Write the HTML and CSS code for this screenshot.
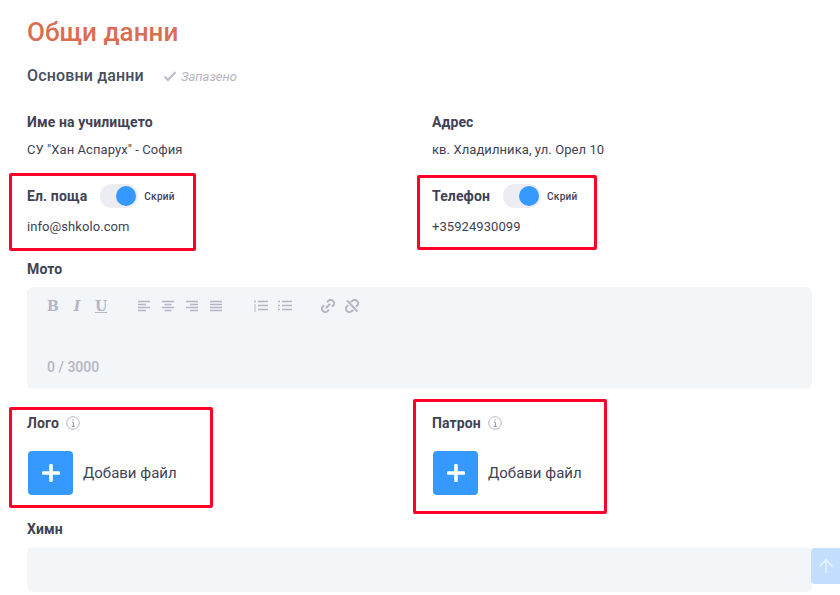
FILE: index.html
```html
<!DOCTYPE html>
<html lang="bg">
<head>
<meta charset="utf-8">
<title>Общи данни</title>
<link rel="stylesheet" href="styles.css">
</head>
<body>
<main class="page">
  <h1 class="title">Общи данни</h1>
  <div class="section-head">
    <h2 class="section-title">Основни данни</h2>
    <span class="saved">
      <svg class="saved-check" viewBox="0 0 14 12" width="14" height="12"><path d="M1.5 6.5 5 10 12.5 2" fill="none" stroke="#b9bcc7" stroke-width="2"/></svg>
      <em>Запазено</em>
    </span>
  </div>

  <div class="row row-info">
    <div class="field">
      <div class="label">Име на училището</div>
      <div class="value">СУ "Хан Аспарух" - София</div>
    </div>
    <div class="field">
      <div class="label">Адрес</div>
      <div class="value">кв. Хладилника, ул. Орел 10</div>
    </div>
  </div>

  <div class="row row-contact">
    <div class="field">
      <div class="label-line">
        <span class="label">Ел. поща</span>
        <span class="switch"><span class="knob"></span></span>
        <span class="switch-text">Скрий</span>
      </div>
      <div class="value value-contact">info@shkolo.com</div>
    </div>
    <div class="field">
      <div class="label-line">
        <span class="label">Телефон</span>
        <span class="switch"><span class="knob"></span></span>
        <span class="switch-text">Скрий</span>
      </div>
      <div class="value value-contact">+35924930099</div>
    </div>
  </div>

  <div class="label label-moto">Мото</div>
  <div class="editor">
    <div class="toolbar">
      <div class="tool-group group-text">
        <span class="glyph glyph-b">B</span>
        <span class="glyph glyph-i">I</span>
        <span class="glyph glyph-u">U</span>
      </div>
      <div class="tool-group group-align">
        <svg class="tool" viewBox="0 0 13 12" width="13" height="12"><path d="M0 1.5h12M0 4.5h8M0 7.5h12M0 10.5h8"/></svg>
        <svg class="tool" viewBox="0 0 13 12" width="13" height="12"><path d="M0 1.5h12M2.5 4.5h7M0 7.5h12M2.5 10.5h7"/></svg>
        <svg class="tool" viewBox="0 0 13 12" width="13" height="12"><path d="M0 1.5h12M4 4.5h8M0 7.5h12M4 10.5h8"/></svg>
        <svg class="tool" viewBox="0 0 13 12" width="13" height="12"><path d="M0 1.5h12M0 4.5h12M0 7.5h12M0 10.5h12"/></svg>
      </div>
      <div class="tool-group group-list">
        <svg class="tool" viewBox="0 0 14 12" width="14" height="12"><path d="M4 1.5h10M4 5.5h10M4 9.5h10"/><path class="thin" d="M0 1h2M1 1v2M0 5h2M0 7h2M0 9h2M0 11h2"/></svg>
        <svg class="tool" viewBox="0 0 14 12" width="14" height="12"><path d="M4 1.5h10M4 5.5h10M4 9.5h10M0 1.5h2M0 5.5h2M0 9.5h2"/></svg>
      </div>
      <div class="tool-group group-link">
        <svg class="tool tool-link" viewBox="0 0 14 14" width="14" height="14"><path d="M6 3.2 7.8 1.6a2.6 2.6 0 0 1 3.7 0l.9.9a2.6 2.6 0 0 1 0 3.7L10.800 7.800M8 10.800 6.200 12.400a2.600 2.600 0 0 1-3.700 0l-.9-.9a2.600 2.600 0 0 1 0-3.700L3.200 6.200M4.800 9.200 9.200 4.800"/></svg>
        <svg class="tool tool-link" viewBox="0 0 14 14" width="14" height="14"><path d="M5.500 3 7.800 1.600a2.600 2.600 0 0 1 3.700 0l.9.900a2.600 2.600 0 0 1 0 3.700L11 8M8.500 11 6.200 12.400a2.600 2.600 0 0 1-3.700 0l-.9-.9a2.600 2.600 0 0 1 0-3.700L3 6M2 1.500 12.500 12.500"/></svg>
      </div>
    </div>
    <div class="counter">0 / 3000</div>
  </div>

  <div class="row row-upload">
    <div class="field">
      <div class="label-line label-line-info">
        <span class="label">Лого</span>
        <svg class="info" viewBox="0 0 14 14" width="14" height="14"><circle cx="7" cy="7" r="6.300" fill="none" stroke="#b4b7c2"/><path d="M7 3.200v1.300M5.800 6.200H7.300V10.400M5.600 10.500h3.200" fill="none" stroke="#8f92a0"/></svg>
      </div>
      <div class="upload">
        <span class="upload-tile"><svg viewBox="0 0 18 18" width="18" height="18"><path d="M9 1.500v15M1.500 9h15" stroke="#fff" stroke-width="3.600" stroke-linecap="round"/></svg></span>
        <span class="upload-text">Добави файл</span>
      </div>
    </div>
    <div class="field">
      <div class="label-line label-line-info">
        <span class="label">Патрон</span>
        <svg class="info" viewBox="0 0 14 14" width="14" height="14"><circle cx="7" cy="7" r="6.300" fill="none" stroke="#b4b7c2"/><path d="M7 3.200v1.300M5.800 6.200H7.300V10.400M5.600 10.500h3.200" fill="none" stroke="#8f92a0"/></svg>
      </div>
      <div class="upload">
        <span class="upload-tile"><svg viewBox="0 0 18 18" width="18" height="18"><path d="M9 1.500v15M1.500 9h15" stroke="#fff" stroke-width="3.600" stroke-linecap="round"/></svg></span>
        <span class="upload-text">Добави файл</span>
      </div>
    </div>
  </div>

  <div class="label label-anthem">Химн</div>
  <div class="editor editor-anthem"></div>

  <span class="mark mark-email"></span>
  <span class="mark mark-phone"></span>
  <span class="mark mark-logo"></span>
  <span class="mark mark-patron"></span>
  <span class="to-top"><svg viewBox="0 0 16 16" width="16" height="16"><path d="M8 15V2M1.500 8.500 8 2l6.500 6.500" fill="none" stroke="#e6f2ff" stroke-width="1.600"/></svg></span>
</main>
</body>
</html>
```
FILE: styles.css
```css
* { box-sizing: border-box; }
html, body { margin: 0; height: 100%; overflow: hidden; background: #fff; }
body { font-family: Roboto, "Liberation Sans", sans-serif; color: #3f4254; }

.page {
  position: relative;
  width: 840px;
  height: 595px;
  padding: 17px 28px 0 27px;
  overflow: hidden;
}

.title {
  margin: 0;
  height: 30px;
  font-size: 26px;
  line-height: 30px;
  font-weight: 500;
  letter-spacing: .05px;
  color: #d96e53;
}

.section-head {
  display: flex;
  align-items: center;
  height: 20px;
  margin-top: 19px;
}
.section-title { margin: 0; font-size: 16px; line-height: 20px; font-weight: 500; letter-spacing: .16px; color: #464e5f; }
.saved { display: flex; align-items: center; margin-left: 19px; font-size: 13px; color: #b5b5c3; }
.saved-check { margin-right: 4px; }
.saved em { font-style: italic; }

.row { display: grid; grid-template-columns: 405px 1fr; }
.row-info { margin-top: 27px; }
.row-contact { margin-top: 25px; }
.row-upload { margin-top: 25px; }

.label { font-size: 14px; line-height: 18px; font-weight: 700; letter-spacing: .12px; color: #3f4254; }
.value { margin-top: 10px; font-size: 13px; line-height: 18px; font-weight: 400; letter-spacing: .07px; color: #3f4254; }
.value-contact { margin-top: 10px; }

.label-line { display: flex; align-items: center; height: 24px; }
.switch {
  display: flex;
  justify-content: flex-end;
  align-items: center;
  width: 38px;
  height: 24px;
  margin-left: 13px;
  padding-right: 2px;
  border-radius: 12px;
  background: #ebedf3;
}
.knob { width: 20px; height: 20px; border-radius: 50%; background: #3699ff; }
.switch-text { margin-left: 6px; font-size: 10px; font-weight: 500; letter-spacing: .3px; color: #3f4254; }

.label-moto { margin-top: 24px; }
.editor { margin-top: 9px; height: 102px; padding: 11px 20px 0; background: #f3f6f9; border-radius: 6px; }
.toolbar { display: flex; align-items: center; height: 16px; }
.tool-group { display: flex; align-items: center; }
.group-text { gap: 12px; width: 91px; }
.group-align { gap: 11px; width: 116px; }
.group-list { gap: 10px; width: 67px; }
.group-link { gap: 10px; }
.glyph { font-family: "DejaVu Serif", serif; font-size: 14px; line-height: 16px; font-weight: 700; color: #b5b5c3; width: 12px; text-align: center; }
.glyph-i { font-style: italic; }
.glyph-u { text-decoration: underline; text-underline-offset: 1px; }
.tool path { fill: none; stroke: #b5b5c3; stroke-width: 1.700; }
.tool path.thin { stroke-width: 1; }
.tool-link path { stroke-width: 2; }
.counter { margin-top: 44px; font-size: 14px; line-height: 18px; font-weight: 500; color: #b5b5c3; }

.label-line-info { height: 18px; }
.info { margin-left: 7px; }
.upload { display: flex; align-items: center; margin-top: 19px; padding-left: 1px; }
.upload-tile {
  display: flex;
  align-items: center;
  justify-content: center;
  width: 45px;
  height: 44px;
  border-radius: 4px;
  background: #3699ff;
}
.upload-text { margin-left: 10px; font-size: 15px; font-weight: 400; color: #3f4254; }

.label-anthem { margin-top: 25px; }
.editor-anthem { height: 45px; padding: 0; }

.mark { position: absolute; border: 3px solid #ff002b; border-radius: 2px; }
.mark-email { left: 9px; top: 173px; width: 187px; height: 78px; }
.mark-phone { left: 417px; top: 175px; width: 180px; height: 75px; }
.mark-logo { left: 9px; top: 407px; width: 204px; height: 101px; }
.mark-patron { left: 413px; top: 399px; width: 194px; height: 115px; }

.to-top {
  position: absolute;
  left: 811px;
  top: 548px;
  width: 29px;
  height: 36px;
  display: flex;
  align-items: center;
  justify-content: center;
  border-radius: 4px 0 0 4px;
  background: #c3dffd;
}
```
